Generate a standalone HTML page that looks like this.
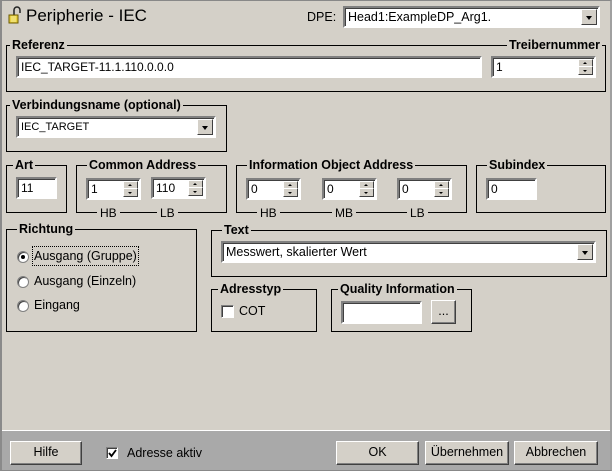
<!DOCTYPE html>
<html><head><meta charset="utf-8"><style>
*{box-sizing:border-box;margin:0;padding:0}
body{width:612px;height:471px;background:#d4d0c8;font-family:"Liberation Sans",sans-serif;font-size:12px;color:#000;position:relative;overflow:hidden}
.a{position:absolute}
.frame{left:0;top:0;width:612px;height:471px;border:1px solid #888;border-left:2px solid #8a8a8a;border-right:2px solid #a0a0a0;pointer-events:none}
.g{position:absolute;border:1px solid #000}
.lg{position:absolute;top:-9px;background:#d4d0c8;font-weight:bold;font-size:12.5px;padding:0 2px;line-height:16px;white-space:nowrap}
.in{position:absolute;background:#fff;border:2px solid;border-color:#808080 #fff #fff #808080;box-shadow:inset 1px 1px 0 #404040;padding:2px 3px;line-height:14px;white-space:nowrap;overflow:hidden}
.dd{position:absolute;right:1px;top:1px;width:16px;background:#d4d0c8;border:1px solid;border-color:#fff #404040 #404040 #fff}
.dd:after{content:"";position:absolute;left:4px;top:6px;border:3.5px solid transparent;border-top:4px solid #000;border-bottom:0}
.sp{position:absolute;right:1px;width:15px;height:9px;background:#d4d0c8;border:1px solid;border-color:#fff #404040 #404040 #fff}
.up{top:1px}.dn{bottom:1px}
.up:after{content:"";position:absolute;left:4px;top:2px;border:2px solid transparent;border-bottom:2px solid #000;border-top:0}
.dn:after{content:"";position:absolute;left:4px;top:3px;border:2px solid transparent;border-top:2px solid #000;border-bottom:0}
.sm{position:absolute;background:#d4d0c8;font-size:12px;padding:0 3px;line-height:12px}
.btn{position:absolute;background:#d4d0c8;border:1px solid;border-color:#fff #404040 #404040 #fff;box-shadow:inset -1px -1px 0 #808080;text-align:center;line-height:21px;font-size:12.5px}
.rd{position:absolute;width:12px;height:12px;border-radius:50%;background:#fff;border:1px solid #808080;box-shadow:inset 1px 1px 0 #404040}
.cb{position:absolute;width:13px;height:13px;background:#fff;border:1px solid;border-color:#808080 #fff #fff #808080;box-shadow:inset 1px 1px 0 #404040}
</style></head><body>
<svg class="a" style="left:8px;top:5px" width="14" height="20" viewBox="0 0 14 20"><path d="M6 10V5a3 3 0 0 1 6 0v3" fill="none" stroke="#222" stroke-width="1.5"/><rect x="1" y="10" width="9" height="8" fill="#e8d040" stroke="#6b5a00"/><path d="M3 12h5M3 14h5M3 16h5" stroke="#f8f0a0"/></svg>
<div class="a" style="left:26px;top:6px;font-size:17px;line-height:20px">Peripherie - IEC</div>
<div class="a" style="left:307px;top:10px;font-size:12.5px">DPE:</div>
<div class="in" style="left:343px;top:6px;width:257px;height:22px;font-size:12.5px">Head1:ExampleDP_Arg1.<div class="dd" style="height:16px"></div></div>

<div class="g" style="left:6px;top:45px;width:482px;height:47px;border-right:0"><div class="lg" style="left:3px">Referenz</div></div>
<div class="g" style="left:487px;top:45px;width:119px;height:47px;border-left:0"><div class="lg" style="right:3px">Treibernummer</div></div>
<div class="in" style="left:16px;top:56px;width:466px;height:22px">IEC_TARGET-11.1.110.0.0.0</div>
<div class="in" style="left:491px;top:56px;width:105px;height:22px">1<div class="sp up"></div><div class="sp dn"></div></div>

<div class="g" style="left:6px;top:105px;width:221px;height:47px"><div class="lg" style="left:3px">Verbindungsname (optional)</div></div>
<div class="in" style="left:16px;top:116px;width:200px;height:22px;font-size:11px">IEC_TARGET<div class="dd" style="height:16px"></div></div>

<div class="g" style="left:6px;top:165px;width:61px;height:48px"><div class="lg" style="left:6px">Art</div></div>
<div class="in" style="left:16px;top:177px;width:41px;height:22px">11</div>

<div class="g" style="left:76px;top:165px;width:151px;height:48px"><div class="lg" style="left:10px">Common Address</div>
<div class="sm" style="left:20px;top:41px">HB</div><div class="sm" style="left:80px;top:41px">LB</div></div>
<div class="in" style="left:86px;top:178px;width:55px;height:22px">1<div class="sp up"></div><div class="sp dn"></div></div>
<div class="in" style="left:151px;top:177px;width:55px;height:22px">110<div class="sp up"></div><div class="sp dn"></div></div>

<div class="g" style="left:236px;top:165px;width:231px;height:48px"><div class="lg" style="left:10px">Information Object Address</div>
<div class="sm" style="left:20px;top:41px">HB</div><div class="sm" style="left:95px;top:41px">MB</div><div class="sm" style="left:170px;top:41px">LB</div></div>
<div class="in" style="left:246px;top:178px;width:55px;height:22px">0<div class="sp up"></div><div class="sp dn"></div></div>
<div class="in" style="left:322px;top:178px;width:55px;height:22px">0<div class="sp up"></div><div class="sp dn"></div></div>
<div class="in" style="left:397px;top:178px;width:55px;height:22px">0<div class="sp up"></div><div class="sp dn"></div></div>

<div class="g" style="left:476px;top:165px;width:130px;height:48px"><div class="lg" style="left:10px">Subindex</div></div>
<div class="in" style="left:486px;top:178px;width:51px;height:22px">0</div>

<div class="g" style="left:6px;top:229px;width:191px;height:103px"><div class="lg" style="left:10px">Richtung</div></div>
<div class="rd" style="left:17px;top:251px"><div class="a" style="left:3px;top:3px;width:4px;height:4px;border-radius:50%;background:#000"></div></div>
<div class="a" style="left:32px;top:246px;border:1px dotted #000;padding:1px 1px;font-size:12.5px;line-height:16px">Ausgang (Gruppe)</div>
<div class="rd" style="left:17px;top:276px"></div>
<div class="a" style="left:34px;top:273px;font-size:12.5px;line-height:16px">Ausgang (Einzeln)</div>
<div class="rd" style="left:17px;top:300px"></div>
<div class="a" style="left:34px;top:297px;font-size:12.5px;line-height:16px">Eingang</div>

<div class="g" style="left:211px;top:230px;width:396px;height:47px"><div class="lg" style="left:10px">Text</div></div>
<div class="in" style="left:221px;top:241px;width:375px;height:22px;font-size:12.5px">Messwert, skalierter Wert<div class="dd" style="height:16px"></div></div>

<div class="g" style="left:211px;top:289px;width:106px;height:43px"><div class="lg" style="left:6px">Adresstyp</div></div>
<div class="cb" style="left:221px;top:305px"></div>
<div class="a" style="left:239px;top:304px;font-size:12.5px">COT</div>

<div class="g" style="left:331px;top:289px;width:141px;height:43px"><div class="lg" style="left:6px">Quality Information</div></div>
<div class="in" style="left:341px;top:301px;width:81px;height:23px"></div>
<div class="btn" style="left:431px;top:300px;width:25px;height:24px;line-height:20px">...</div>

<div class="a" style="left:0;top:430px;width:612px;height:1px;background:#fff"></div>
<div class="a" style="left:0;top:431px;width:612px;height:40px;background:#a9a9a9"></div>
<div class="btn" style="left:10px;top:441px;width:72px;height:24px">Hilfe</div>
<div class="cb" style="left:106px;top:447px;width:12px;height:12px"><svg class="a" style="left:1px;top:1px" width="9" height="9"><path d="M1 4l2.5 3L8 1" fill="none" stroke="#000" stroke-width="1.8"/></svg></div>
<div class="a" style="left:127px;top:446px;font-size:12.5px">Adresse aktiv</div>
<div class="btn" style="left:336px;top:441px;width:83px;height:24px">OK</div>
<div class="btn" style="left:425px;top:441px;width:84px;height:24px">Übernehmen</div>
<div class="btn" style="left:514px;top:441px;width:84px;height:24px">Abbrechen</div>
<div class="a frame"></div>
</body></html>
